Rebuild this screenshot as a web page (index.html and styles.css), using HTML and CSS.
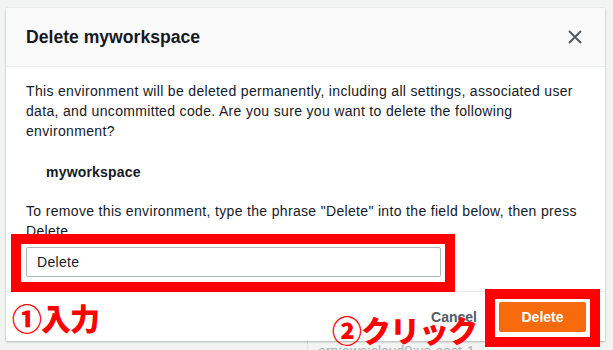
FILE: index.html
```html
<!DOCTYPE html>
<html lang="ja">
<head>
<meta charset="utf-8">
<title>Delete myworkspace</title>
<link rel="stylesheet" href="styles.css">
</head>
<body>
<div class="modal">
  <div class="modal-header">
    <h2 class="modal-title">Delete myworkspace</h2>
    <button class="close" aria-label="Close">
      <svg width="16" height="16" viewBox="0 0 16 16"><path d="M2 2 L14 14 M14 2 L2 14" stroke="#545b64" stroke-width="2" fill="none"/></svg>
    </button>
  </div>
  <div class="modal-body">
    <p class="para">This environment will be deleted permanently, including all settings, associated user data, and uncommitted code. Are you sure you want to delete the following environment?</p>
    <p class="env-name">myworkspace</p>
    <p class="para">To remove this environment, type the phrase "Delete" into the field below, then press Delete.</p>
    <input class="field" type="text" value="Delete">
  </div>
  <div class="modal-footer">
    <span class="cancel">Cancel</span>
    <button class="btn-delete">Delete</button>
  </div>
  <div class="mark mark-input"></div>
  <div class="mark mark-button"></div>
  <div class="note note-1">①入力</div>
  <div class="note note-2">②クリック</div>
</div>
<div class="behind">arn:aws:cloud9:us-east-1</div>
</body>
</html>
```

FILE: styles.css
```css
html, body {
  margin: 0;
  padding: 0;
}
body {
  background: #f2f3f3;
  font-family: "Liberation Sans", Arial, sans-serif;
  color: #16191f;
  width: 613px;
  height: 350px;
  overflow: hidden;
}
.modal {
  position: relative;
  margin: 8px 0 0 6px;
  width: 599px;
  background: #fff;
  box-shadow: 0 1px 2px rgba(0, 0, 0, 0.25), 0 0 1px rgba(0, 0, 0, 0.15);
}
.modal-header {
  height: 58px;
  background: #fafafa;
  border-bottom: 1px solid #eaeded;
  display: flex;
  align-items: center;
  justify-content: space-between;
  padding: 0 22px 0 20px;
}
.modal-title {
  margin: 0;
  font-size: 17.6px;
  font-weight: bold;
  color: #16191f;
}
.close {
  border: 0;
  background: none;
  padding: 0;
  width: 16px;
  height: 16px;
  display: flex;
}
.modal-body {
  padding: 14px 20px 14px 20px;
  font-size: 14px;
  line-height: 20px;
  letter-spacing: 0.33px;
  border-bottom: 1px solid #eaeded;
}
.para {
  margin: 0;
}
.env-name {
  margin: 21px 0 19px 20px;
  font-weight: bold;
  letter-spacing: 0.2px;
}
.field {
  display: block;
  box-sizing: border-box;
  margin-top: 6px;
  width: 415px;
  height: 30px;
  border: 1px solid #aab7b8;
  border-radius: 2px;
  padding: 0 10px;
  font-family: "Liberation Sans", Arial, sans-serif;
  font-size: 14px;
  letter-spacing: 0.3px;
  color: #16191f;
  background: #fff;
}
.modal-footer {
  height: 49px;
  display: flex;
  align-items: center;
  justify-content: flex-end;
  gap: 22px;
  padding: 0 19px 0 20px;
}
.cancel {
  font-size: 14px;
  font-weight: bold;
  color: #545b64;
}
.btn-delete {
  width: 87px;
  height: 30px;
  border: 0;
  border-radius: 2px;
  background: #f76b0c;
  color: #fff;
  font-family: "Liberation Sans", Arial, sans-serif;
  font-size: 14px;
  font-weight: bold;
}
.mark {
  position: absolute;
  border: 10px solid #ff0000;
  box-sizing: border-box;
}
.mark-input {
  left: 5px;
  top: 226px;
  width: 444px;
  height: 58px;
}
.mark-button {
  left: 479px;
  top: 281px;
  width: 115px;
  height: 58px;
}
.note {
  position: absolute;
  color: #ff0000;
  font-family: "Noto Sans CJK JP", sans-serif;
  font-weight: 900;
  font-size: 30px;
  line-height: 30px;
  letter-spacing: -1px;
  white-space: nowrap;
}
.note-1 {
  left: 6px;
  top: 294px;
}
.note-2 {
  left: 326px;
  top: 306px;
}
.behind {
  margin-left: 307px;
  border-left: 1px solid #dcdede;
  padding: 2px 0 0 10px;
  font-size: 14px;
  line-height: 16px;
  color: #aab0b4;
  height: 20px;
}
```
